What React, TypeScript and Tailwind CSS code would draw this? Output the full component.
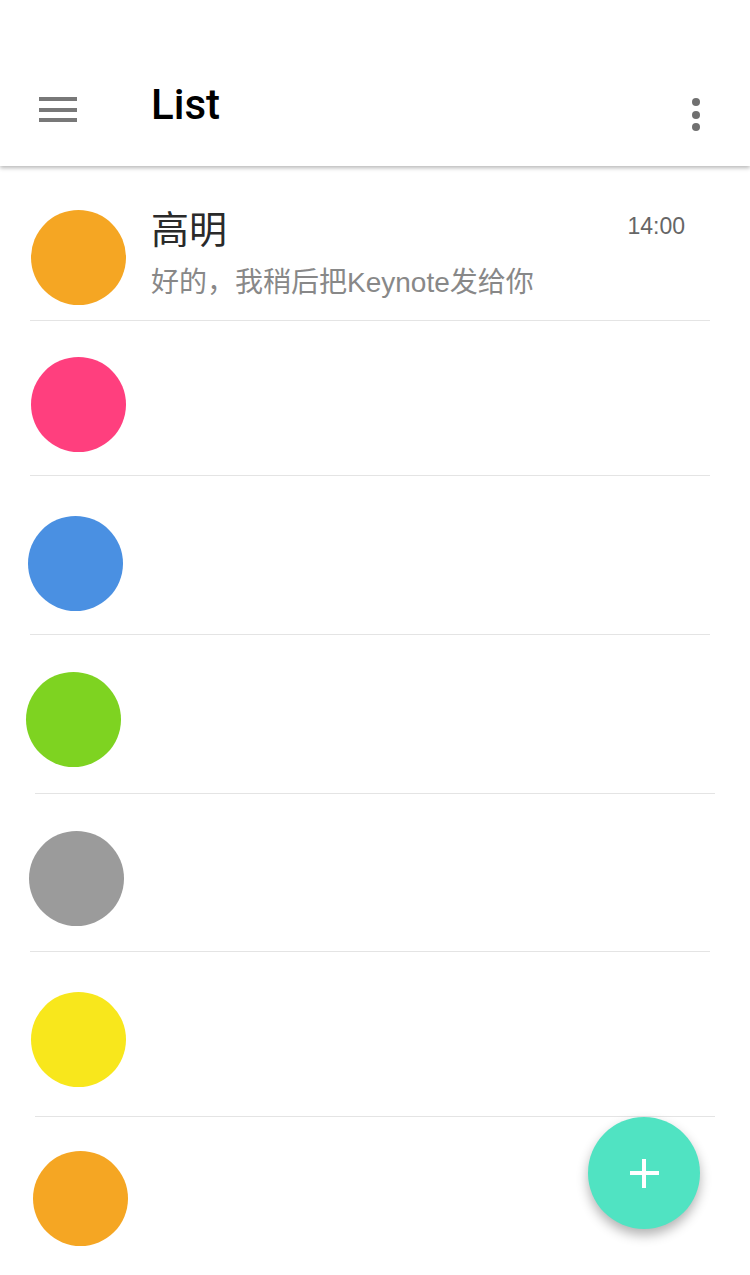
const rows = [
  { color: "bg-[#F5A623]", row: "h-[154px]", dot: "mt-[44px] ml-[31px]", line: "ml-[30px] mr-[40px]", first: true },
  { color: "bg-[#FF3F7E]", row: "h-[154px]", dot: "mt-[36px] ml-[31px]", line: "ml-[30px] mr-[40px]" },
  { color: "bg-[#4A90E2]", row: "h-[158px]", dot: "mt-[40px] ml-[28px]", line: "ml-[30px] mr-[40px]" },
  { color: "bg-[#7ED321]", row: "h-[158px]", dot: "mt-[37px] ml-[26px]", line: "ml-[35px] mr-[35px]" },
  { color: "bg-[#9B9B9B]", row: "h-[157px]", dot: "mt-[37px] ml-[29px]", line: "ml-[30px] mr-[40px]" },
  { color: "bg-[#F8E71C]", row: "h-[164px]", dot: "mt-[40px] ml-[31px]", line: "ml-[35px] mr-[35px]" },
  { color: "bg-[#F5A623]", row: "h-[158px]", dot: "mt-[34px] ml-[33px]", line: "" },
];

const font = { fontFamily: '"Liberation Sans", "Noto Sans CJK SC", sans-serif' };

export default function App() {
  return (
    <div className="relative h-[1275px] w-[750px] overflow-hidden bg-white" style={font}>
      <header className="relative z-10 flex h-[166px] items-start bg-white shadow-[0_2px_4px_rgba(0,0,0,0.28)]">
        <div className="ml-[39px] mt-[97px] flex w-[38px] flex-col gap-[6.5px]">
          <span className="h-[4px] bg-[#787878]" />
          <span className="h-[4px] bg-[#787878]" />
          <span className="h-[4px] bg-[#787878]" />
        </div>
        <h1 className="ml-[74px] mt-[84px] font-['Roboto',sans-serif] text-[42px] font-medium leading-[42px] text-black">List</h1>
        <div className="ml-auto mr-[50px] mt-[98px] flex flex-col gap-[4.5px]">
          <span className="h-[8px] w-[8px] rounded-full bg-[#707070]" />
          <span className="h-[8px] w-[8px] rounded-full bg-[#707070]" />
          <span className="h-[8px] w-[8px] rounded-full bg-[#707070]" />
        </div>
      </header>

      {rows.map((r, i) => (
        <div key={i}>
          <div className={`flex ${r.row}`}>
            <div className={`h-[95px] w-[95px] shrink-0 rounded-full ${r.color} ${r.dot}`} />
            {r.first && (
              <div className="ml-[25px] mt-[42px] flex flex-1 flex-col">
                <div className="flex items-start">
                  <span className="text-[38px] leading-[44px] text-[#2a2a2a]">高明</span>
                  <span className="ml-auto mr-[65px] mt-[4px] text-[23px] leading-[28px] text-[#666]">14:00</span>
                </div>
                <p className="mt-[14px] text-[28px] leading-[34px] text-[#888]">好的，我稍后把Keynote发给你</p>
              </div>
            )}
          </div>
          {r.line && <div className={`h-px bg-[#E4E4E4] ${r.line}`} />}
        </div>
      ))}

      <button className="absolute bottom-[46px] right-[50px] flex h-[112px] w-[112px] items-center justify-center rounded-full bg-[#50E3C2] shadow-[0_6px_12px_rgba(0,0,0,0.3)]">
        <span className="relative block h-[29px] w-[29px]">
          <span className="absolute left-0 top-[12px] h-[4px] w-[29px] bg-white" />
          <span className="absolute left-[12px] top-0 h-[29px] w-[4px] bg-white" />
        </span>
      </button>
    </div>
  );
}
